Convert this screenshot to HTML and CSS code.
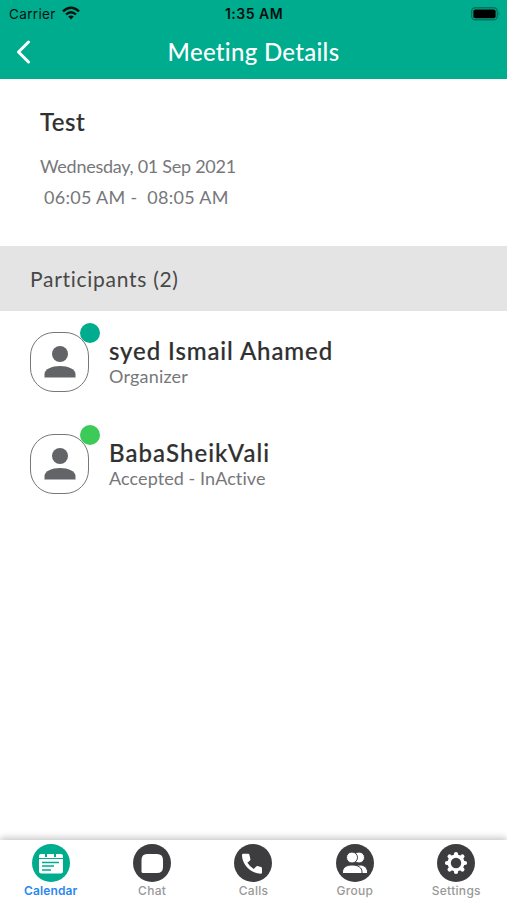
FILE: index.html
```html
<!DOCTYPE html>
<html lang="en">
<head>
<meta charset="utf-8">
<title>Meeting Details</title>
<link rel="stylesheet" href="styles.css">
</head>
<body>
<div class="app">
  <header class="header">
    <div class="status">
      <div class="carrier"><span class="carrier-name">Carrier</span>
        <svg class="wifi" width="18" height="14" viewBox="0 0 18 14"><g fill="none" stroke="#05110e" stroke-width="2.4"><path d="M1 5.4Q9-2 17 5.4"/><path d="M4 8.5Q9 3.800 14 8.500"/></g><path d="M6.200 10.500Q9 8.300 11.800 10.500L9 13.600Z" fill="#05110e"/></svg>
      </div>
      <span class="clock">1:35 AM</span>
      <svg class="battery" width="30" height="14" viewBox="0 0 30 14"><rect x=".7" y=".7" width="25.6" height="12" rx="3.500" fill="none" stroke="#05735d" stroke-width="1.400"/><rect x="2.400" y="2.400" width="22.200" height="8.800" rx="1.800"/><path d="M27.600 4.800Q29.500 6.700 27.600 8.600Z" fill="#05735d"/></svg>
    </div>
    <div class="titlebar">
      <svg class="back" width="16" height="24" viewBox="0 0 16 24"><path d="M13.500 2 3.500 12l10 10" fill="none" stroke="#fff" stroke-width="3" stroke-linecap="round" stroke-linejoin="round"/></svg>
      <h1 class="title">Meeting Details</h1>
    </div>
  </header>
  <section class="meeting">
    <h2 class="meeting-name">Test</h2>
    <p class="date">Wednesday, 01 Sep 2021</p>
    <p class="time">06:05 AM -&nbsp; 08:05 AM</p>
  </section>
  <h3 class="section-title"><span>Participants (2)</span></h3>
  <ul class="people">
    <li class="person">
      <div class="avatar"><svg width="32" height="32" viewBox="0 0 32 32" fill="#636467"><circle cx="16" cy="8" r="8"/><path d="M.5 31.500V28C.5 23 8 20 16 20s15.500 3 15.500 8v3.500z"/></svg><i class="dot organizer"></i></div>
      <div class="info"><div class="name n1">syed Ismail Ahamed</div><div class="role r1">Organizer</div></div>
    </li>
    <li class="person">
      <div class="avatar"><svg width="32" height="32" viewBox="0 0 32 32" fill="#636467"><circle cx="16" cy="8" r="8"/><path d="M.5 31.500V28C.5 23 8 20 16 20s15.500 3 15.500 8v3.500z"/></svg><i class="dot accepted"></i></div>
      <div class="info"><div class="name n2">BabaSheikVali</div><div class="role r2">Accepted - InActive</div></div>
    </li>
  </ul>
  <nav class="tabs">
    <a class="tab active"><svg class="icon" viewBox="0 0 38 38"><circle cx="19" cy="19" r="19" fill="#00ac8e"/><path d="M7 14v-2q0-2 2-2h4v3h2v-3h7v3h2v-3h5q2 0 2 2v2zM7 15h24v12q0 2.500-2.500 2.500h-19Q7 29.500 7 27z" fill="#fff"/><path d="M10 18.500h17M10 22h12M10 26h9" stroke="#00ac8e" stroke-width="1.500"/></svg><span>Calendar</span></a>
    <a class="tab"><svg class="icon" viewBox="0 0 38 38"><circle cx="19" cy="19" r="19" fill="#3d3d3f"/><path d="M14 10h10q6 0 6 6v7q0 6-6 6H10q-1.500 0-1.500-1.500V16q0-6 5.500-6z" fill="#fff"/></svg><span>Chat</span></a>
    <a class="tab"><svg class="icon" viewBox="0 0 38 38"><circle cx="19" cy="19" r="19" fill="#3d3d3f"/><path d="M9.200 9.800h5q1 0 1.200 1l1 4.500q.1.600-.4 1.100l-2.600 2.300q2.600 4.100 6.300 6.300l2.500-2.500q.6-.6 1.300-.4l3.500.8q1 .3 1 1.300v4.400q0 1.200-1.200 1.200C16.500 29.500 8 20.500 8 11q0-1.200 1.200-1.200z" fill="#fff"/></svg><span>Calls</span></a>
    <a class="tab"><svg class="icon" viewBox="0 0 38 38"><circle cx="19" cy="19" r="19" fill="#3d3d3f"/><g fill="#fff" stroke="#3d3d3f"><circle cx="23" cy="13.500" r="5.500"/><path d="M17 29.500v-2c0-4 3-6.500 7-6.500s7.500 2.500 7.500 7v1.500z"/><circle cx="16" cy="13.500" r="5.500"/><path d="M6.500 29.500V28c0-4.500 4-7 9.500-7 6 0 10 2.500 10 7v1.500z"/></g></svg><span>Group</span></a>
    <a class="tab"><svg class="icon" viewBox="0 0 38 38"><circle cx="19" cy="19" r="19" fill="#3d3d3f"/><g stroke="#fff" stroke-width="4.200" stroke-linecap="round"><path d="M19 10v18M10 19h18M12.600 12.600l12.800 12.800M25.400 12.600 12.600 25.400"/></g><circle cx="19" cy="19" r="8.500" fill="#fff"/><circle cx="19" cy="19" r="5.200" fill="#3d3d3f"/></svg><span>Settings</span></a>
  </nav>
</div>
</body>
</html>
```
FILE: styles.css
```css
* { box-sizing: border-box; margin: 0; padding: 0; }
body { background: #fff; color: #303030; font-family: Lato, sans-serif; font-variant-ligatures: none; }
.app { height: 900px; display: flex; flex-direction: column; overflow: hidden; }
.header { height: 79px; background: #00ac8e; }
.status { height: 27px; display: grid; grid-template-columns: 1fr auto 1fr; align-items: center; padding: 0 6px 0 9px; font-family: Inter, sans-serif; font-size: 13.5px; color: #05110e; }
.carrier { display: flex; align-items: center; gap: 6px; }
.carrier-name { letter-spacing: .35px; }
.wifi { margin-top: -2px; }
.clock { font-size: 14px; font-weight: 600; letter-spacing: .5px; margin-right: 2px; }
.battery { justify-self: end; }
.titlebar { height: 50px; display: grid; grid-template-columns: 60px 1fr 60px; align-items: center; }
.back { margin-left: 15px; }
.title { text-align: center; color: #fff; font-size: 24px; font-weight: 500; line-height: 30px; letter-spacing: .3px; }
.meeting { height: 167px; padding: 28px 40px 0; }
.meeting-name { font-size: 24px; line-height: 30px; font-weight: 500; letter-spacing: .5px; -webkit-text-stroke: .2px; }
.date { margin-top: 14px; font-size: 18px; line-height: 30px; color: #77777a; letter-spacing: -.27px; }
.time { padding-left: 4px; font-size: 18px; line-height: 32px; color: #77777a; letter-spacing: .3px; }
.section-title { height: 65px; padding-left: 30px; display: flex; align-items: center; background: #e4e4e4; font-size: 21px; font-weight: 400; color: #484848; letter-spacing: .72px; }
.people { flex: 1; list-style: none; padding: 21px 30px; display: flex; flex-direction: column; gap: 42px; }
.person { display: flex; gap: 20px; }
.avatar { position: relative; width: 59px; height: 60px; border: 1.5px solid #77777a; border-radius: 24px; display: flex; align-items: center; justify-content: center; }
.dot { position: absolute; top: -10px; right: -12px; width: 20px; height: 20px; border-radius: 50%; }
.organizer { background: #00ac8e; }
.accepted { background: #3cca58; }
.info { padding-top: 5px; }
.name { font-size: 24px; line-height: 28px; font-weight: 500; -webkit-text-stroke: .2px; }
.n1 { letter-spacing: .9px; }
.n2 { letter-spacing: 1.08px; }
.role { font-size: 18px; line-height: 22px; color: #77777a; }
.r1 { letter-spacing: .2px; }
.r2 { letter-spacing: .08px; }
.tabs { height: 60px; display: grid; grid-template-columns: repeat(5, 1fr); background: #fff; box-shadow: 0 -2px 7px rgba(0,0,0,.24); }
.tab { display: flex; flex-direction: column; align-items: center; padding-top: 4px; font: 500 12px/18px Inter, sans-serif; color: #999; letter-spacing: .3px; }
.icon { width: 38px; height: 38px; }
.active { color: #2b87f0; font-weight: 600; letter-spacing: .12px; }
```
